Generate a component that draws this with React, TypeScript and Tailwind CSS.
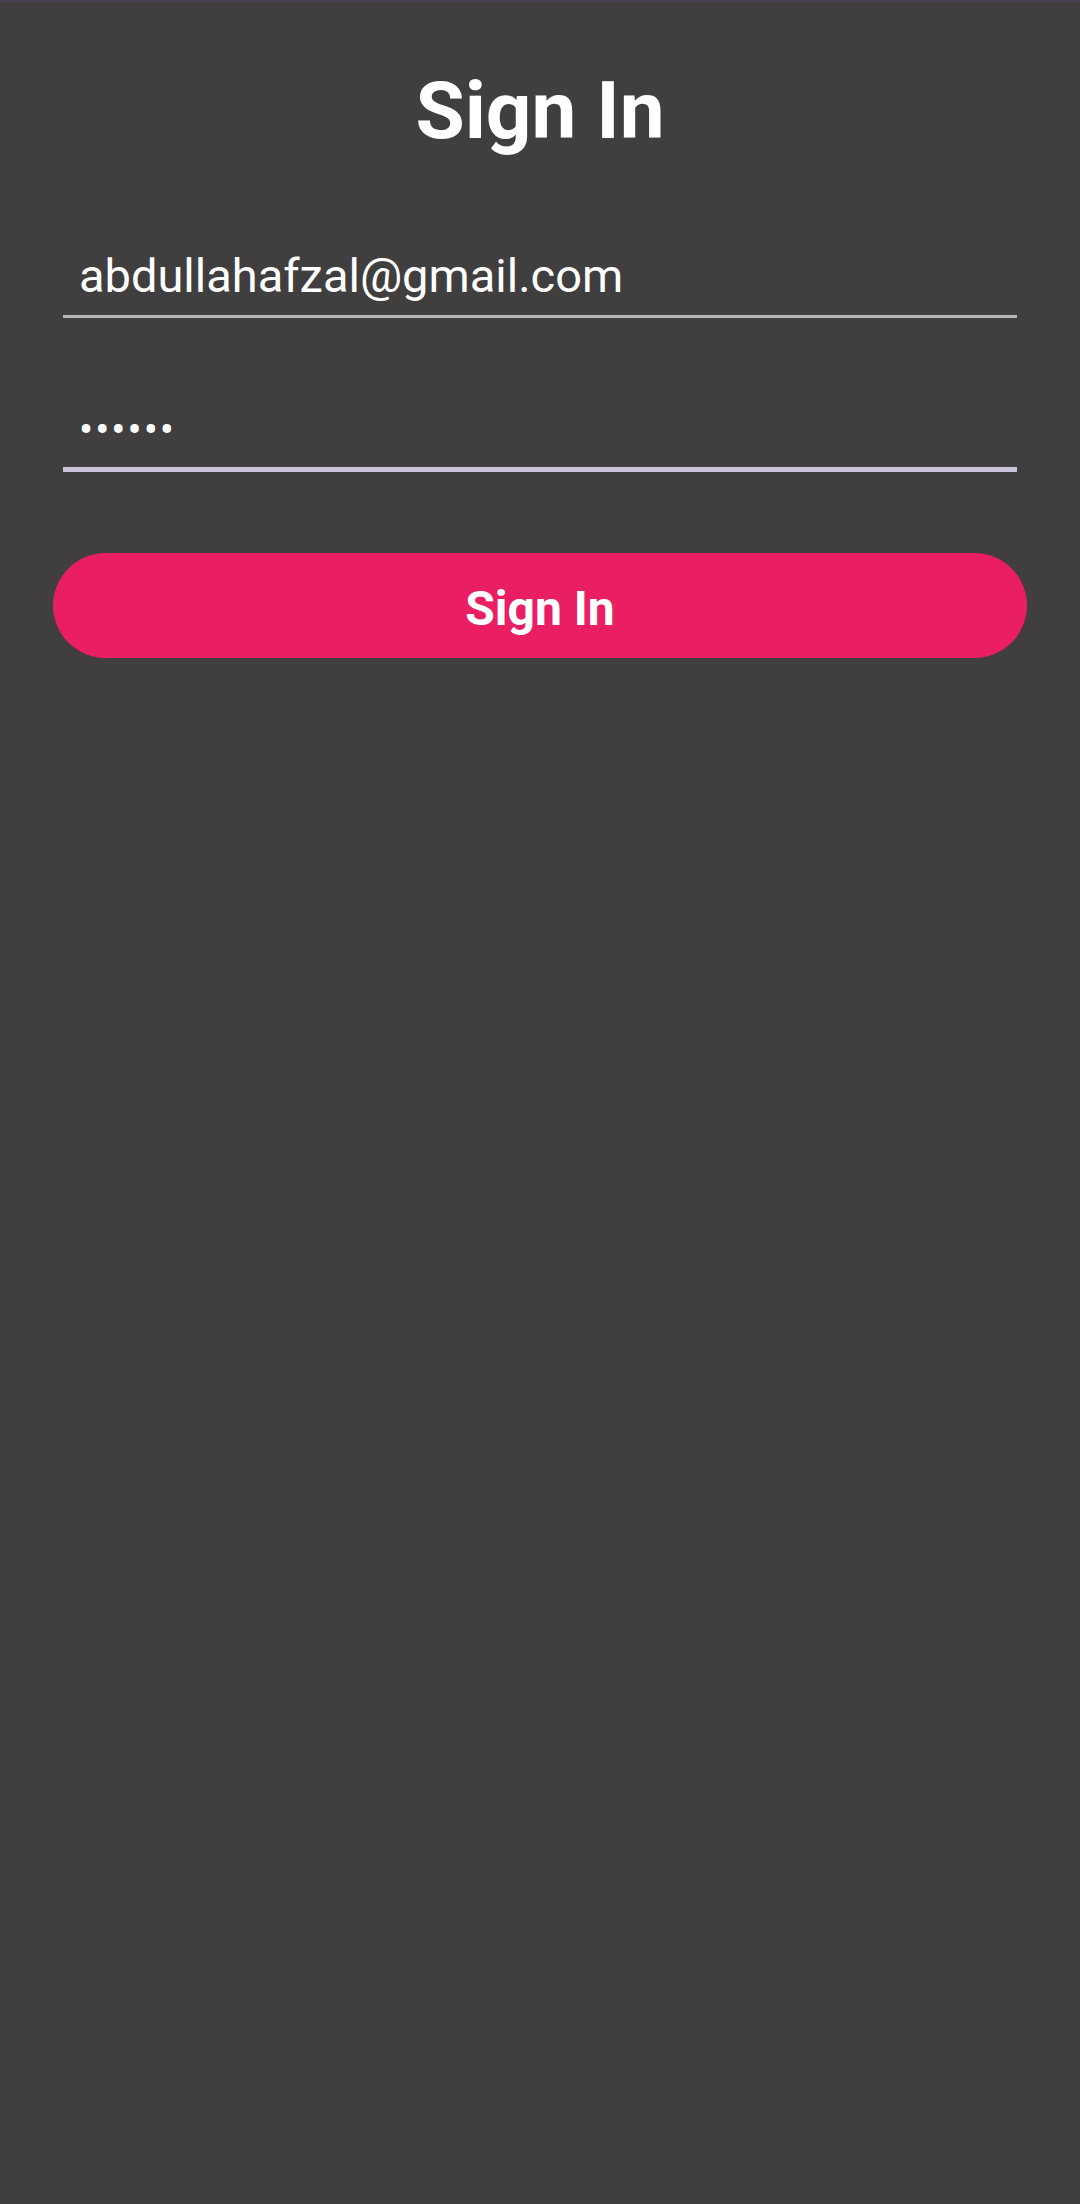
export default function App() {
  return (
    <div className="min-h-screen w-full bg-[#403e3f] font-['Roboto',sans-serif]">
      {/* status strip */}
      <div className="h-[3px] bg-gradient-to-b from-[#4a3f58] to-[#403e3f]" />

      {/* Title */}
      <h1 className="mt-[68px] text-center text-[80px] leading-[80px] font-bold text-white">
        Sign In
      </h1>

      <div className="mx-[63px]">
        {/* Email */}
        <div className="mt-[101px]">
          <div className="pl-[16px] text-[47px] leading-[47px] text-white">
            abdullahafzal@gmail.com
          </div>
          <div className="mt-[16px] h-[3px] bg-[#bab5bb]" />
        </div>

        {/* Password */}
        <div className="mt-[91px]">
          <div className="pl-[16px] text-[42px] leading-[42px] text-white tracking-[2px]">
            ••••••
          </div>
          <div className="mt-[16px] h-[5px] bg-[#cbc3db]" />
        </div>
      </div>

      {/* Button */}
      <div className="mx-[53px] mt-[81px]">
        <button className="flex h-[105px] w-full items-center justify-center rounded-full bg-[#e91e63] pt-[6px] text-[48px] leading-[48px] font-bold text-white">
          Sign In
        </button>
      </div>
    </div>
  );
}
